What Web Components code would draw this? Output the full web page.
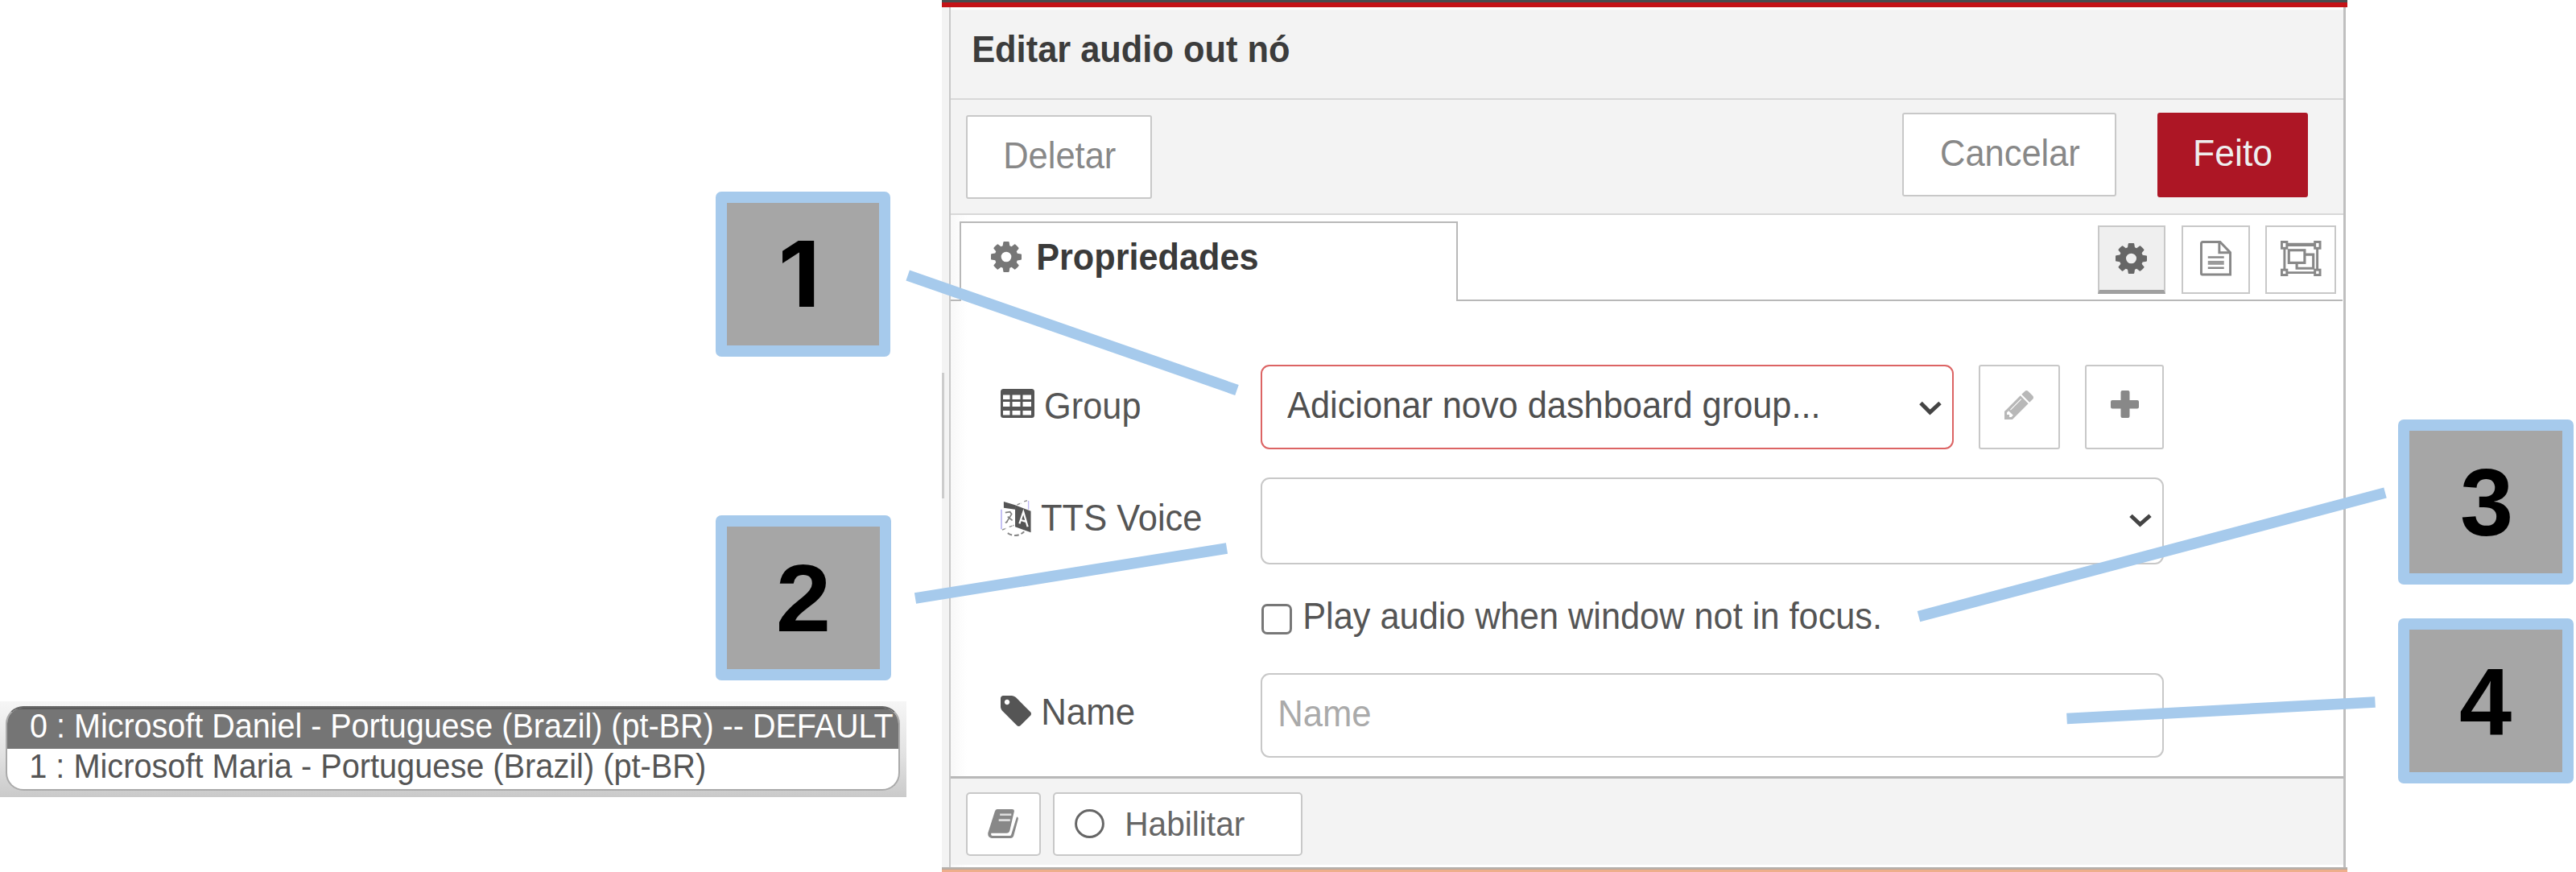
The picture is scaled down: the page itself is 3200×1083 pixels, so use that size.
<!DOCTYPE html>
<html lang="pt-BR">
<head>
<meta charset="utf-8">
<title>Editar audio out nó</title>
<style>
  html, body { margin: 0; background: #fff; overflow: hidden; }
  body { font-family: "Liberation Sans", Arial, sans-serif; }
</style>
</head>
<body>
<audio-out-guide></audio-out-guide>
<script>
const define = (name, html, setup) => {
  const tpl = document.createElement('template');
  tpl.innerHTML = html;
  customElements.define(name, class extends HTMLElement {
    connectedCallback() {
      if (this.shadowRoot) return;
      this.attachShadow({ mode: 'open' }).appendChild(tpl.content.cloneNode(true));
      if (setup) setup(this, this.shadowRoot);
    }
  });
};

/* A line of text whose inked part fills the width given by w */
define('fit-text', `<style>
  :host { display: flex; flex: none; line-height: 1; }
  span { display: block; flex: none; transform-origin: 0 0; line-height: 1; white-space: nowrap; }
</style><span><slot></slot></span>`, (el, root) => {
  const w = +el.getAttribute('w'), fs = +(el.getAttribute('fs') || 46);
  el.style.fontSize = fs + 'px';
  el.style.width = w + 'px';
  el.style.height = fs + 'px';
  const cs = getComputedStyle(el);
  const ctx = document.createElement('canvas').getContext('2d');
  ctx.font = cs.fontWeight + ' ' + fs + 'px ' + cs.fontFamily;
  const m = ctx.measureText(el.textContent);
  const s = w / (m.actualBoundingBoxLeft + m.actualBoundingBoxRight);
  root.querySelector('span').style.transform =
    'translateX(' + (m.actualBoundingBoxLeft * s) + 'px) scaleX(' + s + ')';
});

const ICONS = {
  cog: ['128 128 1536 1536', '<path fill="currentColor" d="M1152 896q0-106-75-181t-181-75-181 75-75 181 75 181 181 75 181-75 75-181zm512-109v222q0 12-8 23t-20 13l-185 28q-19 54-39 91 35 50 107 138 10 12 10 25t-9 23q-27 37-99 108t-94 71q-12 0-26-9l-138-108q-44 23-91 38-16 136-29 186-7 28-36 28h-222q-14 0-24.500-8.500t-11.500-21.500l-28-184q-49-16-90-37l-141 107q-10 9-25 9-14 0-25-11-126-114-165-168-7-10-7-23 0-12 8-23 15-21 51-66.500t54-70.500q-27-50-41-99l-183-27q-13-2-21-12.500t-8-23.500v-222q0-12 8-23t19-13l186-28q14-46 39-92-40-57-107-138-10-12-10-24 0-10 9-23 26-36 98.500-107.500t94.500-71.500q13 0 26 10l138 107q44-23 91-38 16-136 29-186 7-28 36-28h222q14 0 24.500 8.500t11.500 21.500l28 184q49 16 90 37l142-107q9-9 24-9 13 0 25 10 129 119 165 170 7 8 7 22 0 12-8 23-15 21-51 66.500t-54 70.500q26 50 41 98l183 28q13 2 21 12.500t8 23.500z"/>'],
  tag: ['128 256 1515 1515', '<path fill="currentColor" d="M576 576q0-53-37.500-90.500t-90.500-37.500-90.500 37.500-37.500 90.500 37.500 90.500 90.500 37.500 90.500-37.500 37.500-90.500zm1067 576q0 53-37 90l-491 492q-39 37-91 37-53 0-90-37l-715-716q-38-37-64.500-101t-26.500-117v-416q0-52 38-90t90-38h416q53 0 117 26.500t102 64.500l715 714q37 39 37 91z"/>'],
  pencil: ['128 149 1515 1515', '<path fill="currentColor" d="M491 1536l91-91-235-235-91 91v107h128v128h107zm523-928q0-22-22-22-10 0-17 7l-542 542q-7 7-7 17 0 22 22 22 10 0 17-7l542-542q7-7 7-17zm-54-192l416 416-832 832h-416v-416zm683 96q0 53-37 90l-166 166-416-416 166-165q36-38 90-38 53 0 91 38l235 234q37 39 37 91z"/>'],
  plus: ['0 0 35 34', '<path fill="currentColor" d="M14.500 0h7a2 2 0 0 1 2 2v10H33a2 2 0 0 1 2 2v6.500a2 2 0 0 1-2 2h-9.500V32a2 2 0 0 1-2 2h-7a2 2 0 0 1-2-2v-9.500H2a2 2 0 0 1-2-2V14a2 2 0 0 1 2-2h10.500V2a2 2 0 0 1 2-2z"/>'],
  table: ['0 0 42 36', '<rect width="42" height="36" rx="3.500" fill="currentColor"/><g fill="#fff"><path d="M3 7.500h8.500v5.500H3zM14.500 7.500h10v5.500h-10zM27.500 7.500h10.500v5.500H27.500zM3 16h8.500v6H3zM14.500 16h10v6h-10zM27.500 16h10.500v6H27.500zM3 27h8.500v5.500H3zM14.500 27h10v5.500h-10zM27.500 27h10.500v5.500H27.500z"/></g>'],
  chevron: ['0 0 28 18', '<path d="M2 2.500L13.500 14 26 2.500" fill="none" stroke="currentColor" stroke-width="5"/>'],
  doc: ['0 0 40 45', '<g fill="none" stroke="currentColor" stroke-width="3"><path d="M3.500 1.500h22L38.500 15v28h-36a1 1 0 0 1-1-1v-38.500a2 2 0 0 1 2-2z"/><path d="M24.500 1.500v13.500h14"/><path d="M10 21h20.500M10 34.500h20.500" stroke-width="2.600"/></g><path d="M10 25.500h20.500v5h-20.500z" fill="currentColor" opacity=".85"/>'],
  group: ['0 0 52 45', '<g fill="none" stroke="currentColor"><path d="M8 5h36" stroke-width="4.500"/><path d="M5 8v30M46.500 8v30M8 40.500h36" stroke-width="3"/><g fill="#fff" stroke-width="3"><rect x="1.500" y="1.500" width="6.500" height="8"/><rect x="43.500" y="1.500" width="6.500" height="8"/><rect x="1.500" y="37" width="6.500" height="6.500"/><rect x="43.500" y="37" width="6.500" height="6.500"/></g><path d="M31 17.500h10.500V35H20.500v-7.500" stroke-width="3.200"/><rect x="10.500" y="12" width="20" height="16" stroke-width="3.200"/></g>'],
  book: ['0 0 41 37', '<path fill="currentColor" d="M12 0H31q3.500 0 2.500 3.500L28 27.500q-.8 3-4 3H4.500Q3.500 33.500 6 34H28q1.500 0 2-2L37 9.500q2.500 1 1.600 3.500L33 34q-1 3-4 3H5Q-.5 36 .4 30L9 3q.8-3 3-3z"/><path d="M15.500 7h14.500M14 14h14.500" stroke="#ddd" stroke-width="2.600"/>'],
  ring: ['0 0 38 37', '<ellipse cx="19" cy="18.500" rx="17.400" ry="16.900" fill="none" stroke="currentColor" stroke-width="3"/>'],
  language: ['0 0 40 47', '<path d="M4 2l14.500 4.500v5.500L4 10z" fill="currentColor"/><path d="M18.500 6.500L38.500 14v27L18.500 34z" fill="currentColor"/><path d="M24 30l5-15 5.500 19M26 25.500l6.500 2" fill="none" stroke="#fff" stroke-width="2.300"/><g fill="none" stroke="currentColor" stroke-width="1.400"><path d="M1 12v25" stroke="#aaa4ee"/><path d="M35.500 1v11" stroke="#bdb8f3"/><path d="M21 6l5-2M30 2l4-1.500M2 38l5-2M11 34l6-2" stroke-dasharray="4 1" opacity=".7"/><path d="M6 16l6-1 2 3-7 11M9 21l6 5M6 29l3-2" opacity=".75" stroke-width="1.800"/><path d="M9 42q11 7 21-2" stroke-dasharray="6 3" stroke-width="2" opacity=".7"/></g>']
};
define('ui-icon', `<style>:host{display:block;flex:none}svg{display:block;width:100%;height:100%;overflow:visible}</style><svg preserveAspectRatio="none"></svg>`, (el, root) => {
  const [vb, body] = ICONS[el.getAttribute('name')];
  el.style.width = el.getAttribute('w') + 'px';
  el.style.height = el.getAttribute('h') + 'px';
  const svg = root.querySelector('svg');
  svg.setAttribute('viewBox', vb);
  svg.innerHTML = body;
});

/* Bordered box for buttons and inputs; w/h are outer sizes, px/py place its content */
define('ui-box', `
<style>
  :host { display: flex; flex: none; box-sizing: border-box; align-items: flex-start; background: #fff;
    border: 2px solid #c8c8c8; border-radius: 3px; color: #888; }
  :host([kind=field]) { border-radius: 11px; color: #555; }
  :host([kind=error]) { border: 2px solid #dc6464; border-radius: 11px; color: #555; }
  :host([kind=primary]) { border-color: #ad1625; background: #ad1625; color: #eee; }
  :host([kind=active]) { background: #efefef; border-bottom: 5px solid #a0a0a0; color: #666; border-radius: 0; }
  :host([kind=flat]) { border-radius: 0; }
</style><slot></slot>`, el => {
  for (const [a, p] of [['w', 'width'], ['h', 'height'], ['px', 'paddingLeft'], ['py', 'paddingTop'], ['ml', 'marginLeft'], ['mt', 'marginTop']])
    if (el.hasAttribute(a)) el.style[p] = el.getAttribute(a) + 'px';
});

define('voice-list', `
<style>
  :host { display: flow-root; width: 1126px; height: 119px; background: linear-gradient(#f6f6f6, #e2e2e2 55%, #cacaca); overflow: hidden; }
  .list { margin: 6px 0 0 7px; width: 1111px; height: 105px; box-sizing: border-box; border: 2px solid #aaa;
    border-top-color: #666; border-radius: 22px; overflow: hidden; background: #fff; color: #555; }
  .row { height: 52px; box-sizing: border-box; padding-left: 28.500px; }
  .on { background: #757575; color: #fff; padding-top: 0; height: 51px; border-top: 2px solid #5c5c5c; }
  .off { padding-top: 0; }
</style>
<div class="list">
  <div class="row on"><fit-text w="1071.500" fs="43" style="margin-top:-1px">0 : Microsoft Daniel - Portuguese (Brazil) (pt-BR) -- DEFAULT</fit-text></div>
  <div class="row off"><fit-text w="836" fs="43" style="margin-left:1px">1 : Microsoft Maria - Portuguese (Brazil) (pt-BR)</fit-text></div>
</div>`);

define('form-label', `
<style>
  :host { display: flex; flex: none; width: 323px; align-items: flex-start; color: #555; }
</style><slot></slot>`);

define('node-editor', `
<style>
  :host { display: flex; flex-direction: column; width: 1746px; height: 1083px; }
  .bar { height: 3px; background: #4a4d4f; }
  .red { height: 5.500px; background: #c41317; width: 1746px; }
  .frame { display: flex; height: 1068px; }
  .strip { width: 9px; background: #f3f3f3; display: flex; }
  .strip i { width: 3px; height: 156px; margin-top: 454px; background: #ccc; }
  .content { width: 1729.500px; border-left: 2px solid #c8c8c8; border-right: 3px solid #bfbfbf;
    display: flex; flex-direction: column; background: linear-gradient(90deg, #f8f8f8, #fff 20px); box-sizing: content-box; }
  .head, .tools, .tabs, .form, .foot { box-sizing: border-box; display: flex; align-items: flex-start; flex: none; }
  .head { height: 115px; background: linear-gradient(#fff 2px, #f3f3f3 4px); border-bottom: 2px solid #d8d8d8; padding: 29.500px 0 0 28.500px; color: #3c3c3c; font-weight: bold; }
  .tools { height: 143px; background: #f3f3f3; border-bottom: 2px solid #d8d8d8; padding: 16px 0 0 19px; }
  .tabs { height: 107px; padding-top: 8px; }
  .lead { width: 11px; height: 99px; box-sizing: border-box; border-bottom: 2px solid #b8b8b8; }
  .tab { width: 618.500px; height: 99px; box-sizing: border-box; border: 2px solid #b8b8b8; border-bottom: 0; background: #fff;
    display: flex; align-items: flex-start; padding: 23px 0 0 37px; color: #777; }
  .tab fit-text { color: #3a3a3a; font-weight: bold; margin: -4px 0 0 21px; }
  .rest { width: 1099.500px; height: 99px; box-sizing: border-box; border-bottom: 2px solid #b8b8b8; display: flex; padding: 5px 0 0 795px; }
  .form { height: 590px; flex-direction: column; padding: 79px 0 0 62px; }
  .row { display: flex; align-items: flex-start; }
  .dark { color: #444; }
  .check { width: 38px; height: 38px; box-sizing: border-box; border: 3px solid #777; border-radius: 7px; background: #fff; flex: none; }
  .foot { height: 110px; border-top: 3px solid #b8b8b8; background: #f3f3f3; padding: 17px 0 0 19px; }
  .end { height: 3.500px; background: linear-gradient(#bbb, #b5a598); }
  .orange { flex: 1; background: #eeae8b; }
</style>
<div class="bar"></div><div class="red"></div>
<div class="frame">
  <div class="strip"><i></i></div>
  <div class="content">
    <div class="head"><fit-text w="391.500">Editar audio out nó</fit-text></div>
    <div class="tools">
      <ui-box w="230.500" h="104" mt="3.500" px="47" py="24.500"><fit-text w="137">Deletar</fit-text></ui-box>
      <ui-box w="266" h="104" ml="932.500" mt="0.500" px="46.500" py="25"><fit-text w="171.500">Cancelar</fit-text></ui-box>
      <ui-box kind="primary" w="187" h="105" ml="50.500" px="45" py="25.500"><fit-text w="94.500">Feito</fit-text></ui-box>
    </div>
    <div class="tabs">
      <div class="lead"></div>
      <div class="tab"><ui-icon name="cog" w="38" h="38"></ui-icon><fit-text w="272">Propriedades</fit-text></div>
      <div class="rest">
        <ui-box kind="active" w="84.500" h="85.500" px="20" py="20"><ui-icon name="cog" w="39" h="38"></ui-icon></ui-box>
        <ui-box kind="flat" w="85" h="85.500" ml="19.500" px="21.500" py="17.500"><ui-icon name="doc" w="39" h="44"></ui-icon></ui-box>
        <ui-box kind="flat" w="87.500" h="85.500" ml="19.500" px="16.500" py="17.500"><ui-icon name="group" w="51" h="44"></ui-icon></ui-box>
      </div>
    </div>
    <div class="form">
      <div class="row">
        <form-label><ui-icon name="table" w="42" h="36" style="margin-top:30.500px"></ui-icon><fit-text w="117" style="margin:28px 0 0 13.500px">Group</fit-text></form-label>
        <ui-box kind="error" w="861" h="105" px="30.500" py="25.500"><fit-text w="659" style="color:#4f4f4f">Adicionar novo dashboard group...</fit-text><ui-icon class="dark" name="chevron" w="28" h="18" style="margin:18px 0 0 126px"></ui-icon></ui-box>
        <ui-box w="101.500" h="105" ml="30.500" px="30.500" py="30.500"><ui-icon name="pencil" w="36" h="36" style="color:#b8b8b8"></ui-icon></ui-box>
        <ui-box w="98.500" h="105" ml="30.500" px="30.500" py="30.500"><ui-icon name="plus" w="35" h="34"></ui-icon></ui-box>
      </div>
      <div class="row" style="margin-top:35px">
        <form-label><ui-icon name="language" w="39" h="46" style="margin-top:28px"></ui-icon><fit-text w="198" style="margin:27.500px 0 0 11.500px">TTS Voice</fit-text></form-label>
        <ui-box kind="field" w="1122" h="108" px="1077" py="43"><ui-icon class="dark" name="chevron" w="28" h="17"></ui-icon></ui-box>
      </div>
      <div class="row" style="margin-top:41px;padding-left:324px">
        <span class="check" style="margin-top:8px"></span><fit-text w="713.500" style="margin:0 0 0 15.500px;color:#555">Play audio when window not in focus.</fit-text>
      </div>
      <div class="row" style="margin-top:48px">
        <form-label><ui-icon name="tag" w="38" h="38" style="margin-top:28px"></ui-icon><fit-text w="112.500" style="margin:25px 0 0 14.500px">Name</fit-text></form-label>
        <ui-box kind="field" w="1122" h="105" px="22" py="25"><fit-text w="112" style="color:#aaa">Name</fit-text></ui-box>
      </div>
    </div>
    <div class="foot">
      <ui-box w="93" h="79" px="25" py="19.500" style="border-radius:5px"><ui-icon name="book" w="40" h="36"></ui-icon></ui-box>
      <ui-box w="310.500" h="79" ml="14.500" px="25" py="19.500" style="border-radius:5px;color:#666"><ui-icon name="ring" w="37" h="36"></ui-icon><fit-text w="146" fs="43" style="margin:-3px 0 0 28px">Habilitar</fit-text></ui-box>
    </div>
  </div>
</div>
<div class="end"></div><div class="orange"></div>`);

/* Numbered callout pinned over the picture */
define('callout-pin', `
<style>
  :host { position: absolute; box-sizing: border-box; border: 14px solid #a6caec; border-radius: 7px; background: #a6a6a6;
    color: #000; font-weight: bold; height: 205px; display: flex; align-items: flex-start; }
  .in { background: #a6a6a6; flex: 1; align-self: stretch; display: flex; }
</style><div class="in"><slot></slot></div>`, el => {
  el.style.left = el.getAttribute('x') + 'px';
  el.style.top = el.getAttribute('y') + 'px';
  el.style.width = el.getAttribute('w') + 'px';
});

define('audio-out-guide', `
<style>
  :host { display: flex; align-items: flex-start; position: relative; width: 3200px; height: 1083px; overflow: hidden; background: #fff; }
  voice-list { margin: 871px 44px 0 0; flex: none; }
  node-editor { flex: none; }
  .lines { position: absolute; left: 0; top: 0; }
</style>
<voice-list></voice-list>
<node-editor></node-editor>
<svg class="lines" width="3200" height="1083" stroke="#a6caec" stroke-width="13.700">
  <path d="M1127.700 342L1536.500 484.500M1137 743L1524 681M2383.500 765.700L2963 612M2567.500 892.500L2950.500 872"/>
</svg>
<callout-pin x="889" y="238" w="217"><fit-text w="40" fs="113" style="font-family:Inter,sans-serif;margin:32px 0 0 69px">1</fit-text></callout-pin>
<callout-pin x="889" y="640" w="218"><fit-text w="60" fs="119" style="margin:28.500px 0 0 65px">2</fit-text></callout-pin>
<callout-pin x="2979" y="521" w="218"><fit-text w="60" fs="119" style="margin:29px 0 0 65px">3</fit-text></callout-pin>
<callout-pin x="2979" y="768" w="218"><fit-text w="64" fs="119" style="margin:29.500px 0 0 62.500px">4</fit-text></callout-pin>`);
</script>
</body>
</html>
